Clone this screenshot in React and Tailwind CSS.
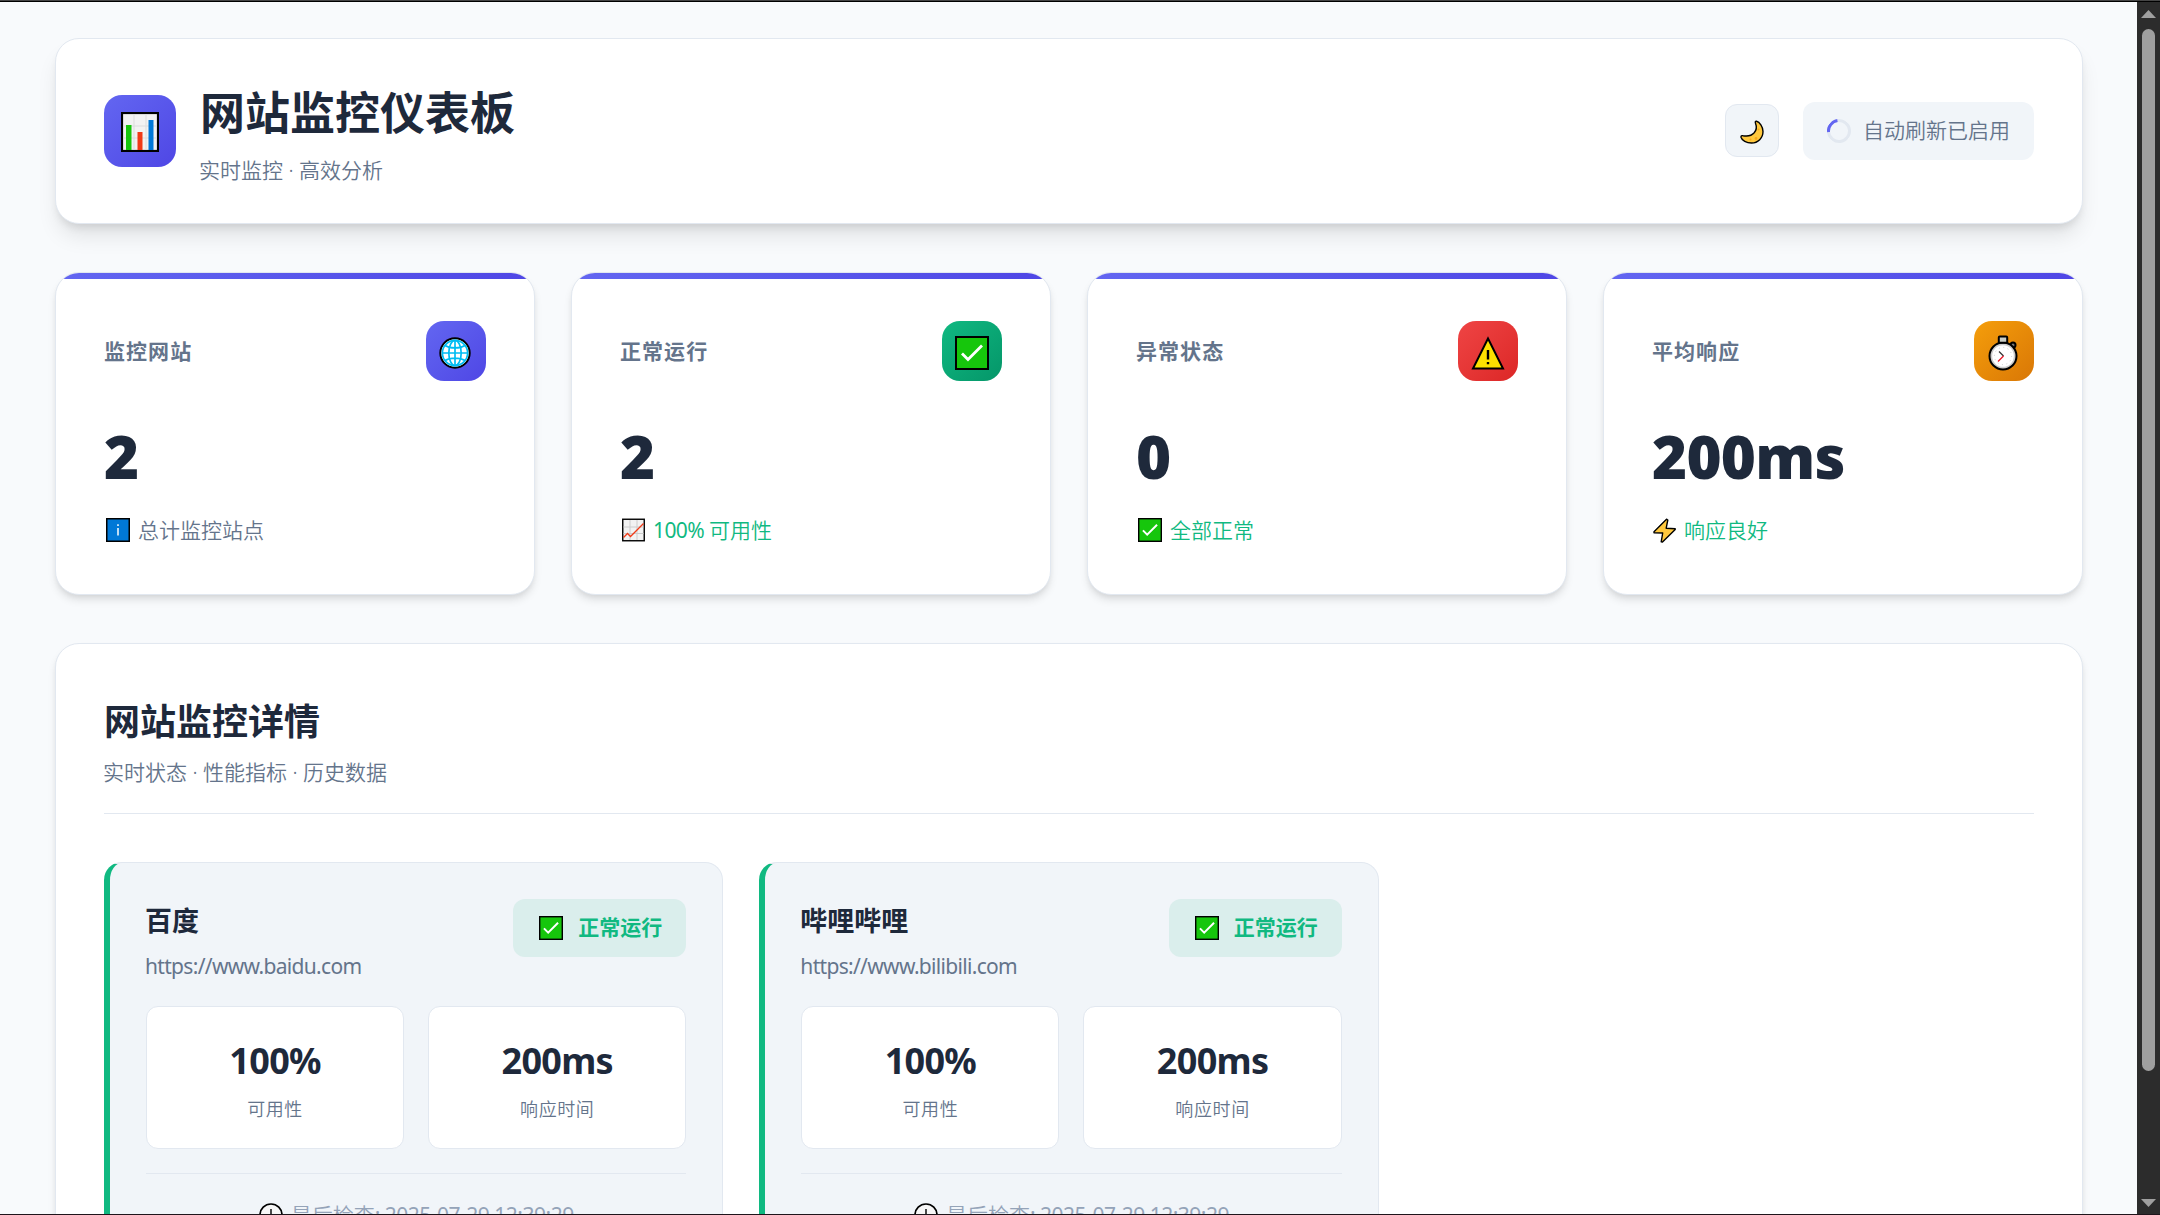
import React from "react";

const FONT = "font-['Noto_Sans','Noto_Sans_CJK_SC',sans-serif]";

function ChartIcon() {
  return (
    <svg viewBox="0 0 38 40" className="mr-px h-[40px] w-[38px]">
      <rect x="1" y="1" width="36" height="38" fill="#f2f2f2" stroke="#000" strokeWidth="2.2" />
      <path d="M13 2v36M25 2v36M2 14h34M2 26h34" stroke="#dcdcdc" strokeWidth="1" fill="none" />
      <rect x="5" y="13" width="5.5" height="25" fill="#16c60c" />
      <rect x="16.5" y="20" width="5" height="18" fill="#f03a17" />
      <rect x="27.5" y="8" width="5" height="30" fill="#0078d7" />
    </svg>
  );
}

function MoonIcon() {
  return (
    <svg viewBox="0 0 24 24" className="h-6 w-6">
      <path
        d="M16.500 1.200C19.500 2 23 6.500 23 11.500C23 18 18 23 11.500 23C6.500 23 2 20.500 1 17.200C.8 16 1.800 15.300 3 15.700C7.500 16.600 11.500 15.800 14.200 12.800C16.600 10 17 7 15.500 3.200C15 1.900 15.400 1 16.500 1.200z"
        fill="#ffc83d"
        stroke="#000"
        strokeWidth="1.400"
      />
      <circle cx="18.500" cy="9.500" r="1" fill="#f7a91b" />
      <circle cx="16" cy="18.500" r="1.400" fill="#f7a91b" />
      <circle cx="10.500" cy="19.500" r="1" fill="#f7a91b" />
    </svg>
  );
}

function GlobeIcon() {
  return (
    <svg viewBox="0 0 32 32" className="mr-0.5 h-8 w-8">
      <circle cx="16" cy="16" r="14.700" fill="#fff" stroke="#000" strokeWidth="2" />
      <g fill="none" stroke="#00bcf2" strokeWidth="1.700">
        <circle cx="16" cy="16" r="12.600" />
        <ellipse cx="16" cy="16" rx="6.200" ry="12.600" />
        <path d="M16 3.500v25M3.500 16h25M6 8.500c5 3.200 15 3.200 20 0M6 23.500c5-3.200 15-3.200 20 0" />
      </g>
    </svg>
  );
}

function CheckIcon({ className }) {
  return (
    <svg viewBox="0 0 34 34" className={className}>
      <rect x="1" y="1" width="32" height="32" fill="#16c60c" stroke="#000" strokeWidth="2" />
      <path d="M7 17.500l6 6L27 9.500" fill="none" stroke="#fff" strokeWidth="2.800" />
    </svg>
  );
}

function WarningIcon() {
  return (
    <svg viewBox="0 0 34 34" className="mr-px h-[34px] w-[34px]">
      <path d="M17 2.500L32 32.500H2z" fill="#fce100" stroke="#000" strokeWidth="2" />
      <path d="M17 14v9.500M17 26v2.200" stroke="#000" strokeWidth="2.400" />
    </svg>
  );
}

function StopwatchIcon() {
  return (
    <svg viewBox="0 0 30 36" className="mr-0.5 h-9 w-[30px]">
      <circle cx="25" cy="10" r="2.500" fill="#767676" stroke="#000" strokeWidth="2" />
      <circle cx="15" cy="21" r="13.500" fill="#ccc" stroke="#000" strokeWidth="2" />
      <rect x="10.800" y="1.500" width="8.400" height="6.300" rx="1" fill="#c9cdc6" stroke="#000" strokeWidth="2" />
      <circle cx="15" cy="21" r="10.800" fill="#fff" />
      <circle cx="15" cy="21" r="8.600" fill="none" stroke="#ccc" strokeWidth="1" strokeDasharray="1 3.500" />
      <path d="M15.500 21l-4.500-4.500" stroke="#333" strokeWidth="1.200" />
      <path d="M15.500 21l-5.500 5.500" stroke="#e81224" strokeWidth="1.200" />
    </svg>
  );
}

function InfoIcon() {
  return (
    <svg viewBox="0 0 24 24" className="h-6 w-6">
      <rect x=".75" y=".75" width="22.500" height="22.500" fill="#0078d7" stroke="#000" strokeWidth="1.500" />
      <path d="M12 10v7.500M12 6.300v1.800" stroke="#fff" strokeWidth="1.500" />
    </svg>
  );
}

function TrendIcon() {
  return (
    <svg viewBox="0 0 23 24" className="h-6 w-[23px]">
      <rect x=".75" y="1.250" width="21.500" height="21.500" fill="#f2f2f2" stroke="#000" strokeWidth="1.400" />
      <path d="M8 2v20M15 2v20M1.500 9h20M1.500 15.500h20" stroke="#ccc" strokeWidth="1" />
      <path d="M1.500 19.500L5.500 15.500L8.500 18.500L21.500 5.500" fill="none" stroke="#f03a17" strokeWidth="1.300" />
    </svg>
  );
}

function BoltIcon() {
  return (
    <svg viewBox="0 0 23 25" className="-ml-px h-[25px] w-[23px]">
      <path
        d="M13.500 1.200L1 13.700v1l8.700.3L8.200 23.800l1.300.2L22.200 11.500v-.8l-9-.5L14.800 2z"
        fill="#ffc83d"
        stroke="#000"
        strokeWidth="1.400"
        strokeLinejoin="round"
      />
    </svg>
  );
}

function ClockIcon() {
  return (
    <svg viewBox="0 0 24 24" className="h-6 w-6">
      <circle cx="12" cy="12" r="11" fill="#f7f7f7" stroke="#000" strokeWidth="1.700" />
      <path d="M12 6v7H8" fill="none" stroke="#000" strokeWidth="1.400" />
    </svg>
  );
}

const stats = [
  {
    label: "监控网站",
    value: "2",
    icon: <GlobeIcon />,
    box: "from-[#6366f1] to-[#4f46e5]",
    trend: "总计监控站点",
    trendIcon: <InfoIcon />,
    tone: "text-[#64748b]",
  },
  {
    label: "正常运行",
    value: "2",
    icon: <CheckIcon className="mr-px h-[34px] w-[34px]" />,
    box: "from-[#10b981] to-[#059669]",
    trend: (
      <>
        <span className="font-normal tracking-[-0.6px]">100% </span>可用性
      </>
    ),
    trendIcon: <TrendIcon />,
    tone: "text-[#10b981]",
  },
  {
    label: "异常状态",
    value: "0",
    icon: <WarningIcon />,
    box: "from-[#ef4444] to-[#dc2626]",
    trend: "全部正常",
    trendIcon: <CheckIcon className="h-6 w-6" />,
    tone: "text-[#10b981]",
  },
  {
    label: "平均响应",
    value: "200ms",
    icon: <StopwatchIcon />,
    box: "from-[#f59e0b] to-[#d97706]",
    trend: "响应良好",
    trendIcon: <BoltIcon />,
    tone: "text-[#10b981]",
  },
];

const sites = [
  { name: "百度", url: "https://www.baidu.com" },
  { name: "哔哩哔哩", url: "https://www.bilibili.com" },
];

function StatCard({ stat }) {
  return (
    <div className="flex h-[323px] flex-col overflow-hidden rounded-3xl border border-[#e2e8f0] bg-white shadow-[0_6px_9px_-1.5px_rgba(0,0,0,0.1),0_3px_6px_-3px_rgba(0,0,0,0.1)]">
      <div className="h-1.5 shrink-0 bg-linear-to-r from-[#6366f1] to-[#4f46e5]" />
      <div className="flex flex-col px-12 pt-[42px]">
        <div className="flex items-center justify-between">
          <span className="pb-px text-[21px] leading-[34px] font-semibold tracking-[1.05px] text-[#64748b]">{stat.label}</span>
          <span className={`flex h-[60px] w-[60px] items-center justify-center rounded-[18px] bg-linear-135 pt-[3px] ${stat.box}`}>
            {stat.icon}
          </span>
        </div>
        <div className="mt-[39px] text-[60px] leading-[72px] font-black tracking-[-0.75px] text-[#1e293b]">{stat.value}</div>
        <div className={`mt-[21px] flex items-center gap-2 pl-0.5 text-[21px] leading-[34px] font-[350] ${stat.tone}`}>
          {stat.trendIcon}
          <span>{stat.trend}</span>
        </div>
      </div>
    </div>
  );
}

function Metric({ value, label }) {
  return (
    <div className="flex h-[143px] flex-col items-center rounded-xl border border-[#e2e8f0] bg-white pt-[25px]">
      <div className="text-[36px] leading-[58px] font-bold tracking-[-0.7px] text-[#1e293b]">{value}</div>
      <div className="mt-[5px] text-[18px] leading-[29px] font-[350] tracking-[0.6px] text-[#64748b]">{label}</div>
    </div>
  );
}

function SiteCard({ site }) {
  return (
    <div className="h-[430px] rounded-[18px] border border-l-[6px] border-[#e2e8f0] border-l-[#10b981] bg-[#f1f5f9] p-9">
      <div className="flex items-start justify-between">
        <div>
          <h3 className="-ml-px text-[27px] leading-[43px] font-semibold text-[#1e293b]">{site.name}</h3>
          <p className="mt-[7px] -mb-px -ml-px text-[21px] leading-[34px] tracking-[-0.68px] text-[#64748b]">{site.url}</p>
        </div>
        <div className="flex h-[58px] w-[173px] items-center justify-between rounded-xl bg-[#daeeec] pr-6 pl-[26px] text-[21px] font-semibold text-[#10b981]">
          <CheckIcon className="h-6 w-6" />
          <span>正常运行</span>
        </div>
      </div>
      <div className="mt-6 grid grid-cols-2 gap-6">
        <Metric value="100%" label="可用性" />
        <Metric value="200ms" label="响应时间" />
      </div>
      <div className="mt-6 flex items-center justify-center gap-2 border-t border-[#e2e8f0] pt-6 text-[21px] leading-[34px] font-[350] text-[#94a3b8]">
        <ClockIcon />
        <span>
          最后检查<span className="font-normal tracking-[-0.5px]">: 2025-07-29 12:39:29</span>
        </span>
      </div>
    </div>
  );
}

export default function App() {
  return (
    <div className={`flex h-[1215px] w-[2160px] flex-col overflow-hidden ${FONT}`}>
      <div className="h-0.5 shrink-0 border-b border-black bg-[#454545]" />
      <div className="flex h-[1212px] shrink-0">
        <main className="h-full w-[2137px] overflow-hidden bg-[#f8fafc] pt-9 pl-[55px]">
          <div className="flex w-[2028px] flex-col gap-12">
            <header className="flex h-[186px] items-center justify-between rounded-3xl border border-[#e2e8f0] bg-white px-12 shadow-[0_15px_22.5px_-4.5px_rgba(0,0,0,0.1),0_6px_9px_-3px_rgba(0,0,0,0.1)]">
              <div className="flex items-center gap-6">
                <div className="flex h-[72px] w-[72px] items-center justify-center rounded-[18px] bg-linear-135 from-[#6366f1] to-[#4f46e5] pt-0.5">
                  <ChartIcon />
                </div>
                <div>
                  <h1 className="pt-0.5 text-[45px] leading-[72px] font-bold text-[#1e293b]">网站监控仪表板</h1>
                  <p className="mt-1 -ml-px text-[21px] leading-[34px] font-[350] text-[#64748b]">实时监控 · 高效分析</p>
                </div>
              </div>
              <div className="flex items-center gap-6">
                <button className="mb-px flex h-[53px] w-[54px] items-center justify-center rounded-xl border border-[#e2e8f0] bg-[#f1f5f9] pt-0.5">
                  <MoonIcon />
                </button>
                <div className="flex h-[58px] w-[231px] items-center justify-between rounded-xl bg-[#f1f5f9] px-6 text-[21px] font-[350] text-[#64748b]">
                  <span className="h-6 w-6 rotate-[-52deg] rounded-full border-[3px] border-[#e2e8f0] border-t-[#6366f1]" />
                  <span>自动刷新已启用</span>
                </div>
              </div>
            </header>

            <section className="grid grid-cols-4 gap-9">
              {stats.map((s) => (
                <StatCard key={s.label} stat={s} />
              ))}
            </section>

            <section className="h-[760px] rounded-3xl border border-[#e2e8f0] bg-white p-12 shadow-[0_6px_9px_-1.5px_rgba(0,0,0,0.1),0_3px_6px_-3px_rgba(0,0,0,0.1)]">
              <div className="mb-12 h-[122px] border-b border-[#e2e8f0]">
                <h2 className="pt-px text-[36px] leading-[58px] font-bold text-[#1e293b]">网站监控详情</h2>
                <p className="mt-1 -ml-px text-[21px] leading-[34px] font-[350] text-[#64748b]">实时状态 · 性能指标 · 历史数据</p>
              </div>
              <div className="grid grid-cols-3 gap-9">
                {sites.map((s) => (
                  <SiteCard key={s.name} site={s} />
                ))}
              </div>
            </section>
          </div>
        </main>
        <aside className="flex h-full w-[23px] flex-col items-center bg-[#2c2c2c] pt-2 pb-[7px]">
          <svg viewBox="0 0 15 8" className="h-2 w-[15px]">
            <path d="M0 8L7.500 0L15 8z" fill="#9f9f9f" />
          </svg>
          <div className="mt-[11px] h-[1042px] w-[13px] rounded-full bg-[#9f9f9f]" />
          <svg viewBox="0 0 15 8" className="mt-auto h-2 w-[15px]">
            <path d="M0 0L7.500 8L15 0z" fill="#9f9f9f" />
          </svg>
        </aside>
      </div>
      <div className="h-px shrink-0 bg-[#1f151b]" />
    </div>
  );
}
